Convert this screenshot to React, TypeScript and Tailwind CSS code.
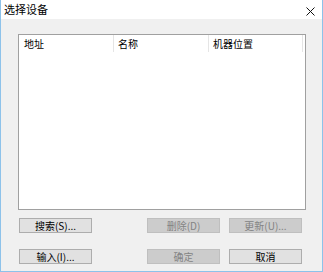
import React from "react";

const font = { fontFamily: '"Noto Sans CJK SC", "Noto Sans", sans-serif' };

function Btn({ label, disabled }: { label: string; disabled?: boolean }) {
  return (
    <div
      className={
        "w-[73px] h-[15px] flex items-center justify-center text-[10px] leading-none border " +
        (disabled
          ? "bg-[#cccccc] border-[#bfbfbf] text-[#838383]"
          : "bg-[#e1e1e1] border-[#adadad] text-[#000000]")
      }
    >
      {label}
    </div>
  );
}

export default function App() {
  return (
    <div
      className="w-[323px] h-[272px] flex flex-col border border-[#8dc2ea] border-t-0 bg-[#f0f0f0]"
      style={font}
    >
      <div className="h-[19px] bg-white flex items-center justify-between pl-[3px] pr-[7px]">
        <span className="text-[11px] leading-none text-black">选择设备</span>
        <svg width="9" height="9" viewBox="0 0 9 9" className="mt-[4px]">
          <path d="M0.5 0.5 L8.5 8.5 M8.5 0.5 L0.5 8.5" stroke="#111" strokeWidth="1" />
        </svg>
      </div>
      <div className="flex-1 flex flex-col pl-[17px] pt-[15px]">
        <div className="w-[288px] h-[176px] bg-white border border-[#a0a0a0]">
          <div className="flex h-[17px] text-[10px] leading-none text-black">
            <div className="w-[95px] flex items-center pl-[5px] border-r border-[#e5e5e5]">地址</div>
            <div className="w-[95px] flex items-center pl-[4px] border-r border-[#e5e5e5]">名称</div>
            <div className="w-[94px] flex items-center pl-[4px] border-r border-[#e5e5e5]">机器位置</div>
          </div>
        </div>
        <div className="flex mt-[8px] pl-[1px]">
          <Btn label="搜索(S)..." />
          <div className="w-[55px]" />
          <Btn label="删除(D)" disabled />
          <div className="w-[9px]" />
          <Btn label="更新(U)..." disabled />
        </div>
        <div className="flex mt-[16px] pl-[1px]">
          <Btn label="输入(I)..." />
          <div className="w-[55px]" />
          <Btn label="确定" disabled />
          <div className="w-[9px]" />
          <Btn label="取消" />
        </div>
      </div>
    </div>
  );
}
